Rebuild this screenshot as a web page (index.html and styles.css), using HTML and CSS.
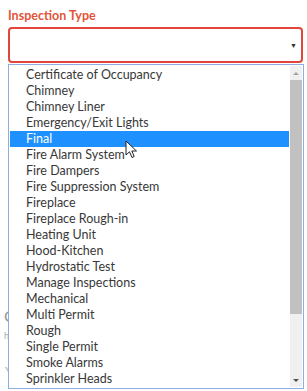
FILE: index.html
```html
<!DOCTYPE html>
<html>
<head>
<meta charset="utf-8">
<link rel="stylesheet" href="styles.css">
</head>
<body>
<div class="page">
  <label class="field-label">Inspection Type</label>
  <div class="select">
    <span class="caret">&#9660;</span>
  </div>
  <div class="bg-form">
    <div class="bg-line l1"></div>
    <div class="bg-line l2"></div>
    <div class="bg-panel">
      <div class="bg-title">C</div>
      <div class="bg-sub">ha</div>
    </div>
    <div class="bg-y">Y</div>
  </div>

  <div class="listbox">
    <ul class="options">
      <li>Certificate of Occupancy</li>
      <li>Chimney</li>
      <li>Chimney Liner</li>
      <li>Emergency/Exit Lights</li>
      <li class="active">Final</li>
      <li>Fire Alarm System</li>
      <li>Fire Dampers</li>
      <li>Fire Suppression System</li>
      <li>Fireplace</li>
      <li>Fireplace Rough-in</li>
      <li>Heating Unit</li>
      <li>Hood-Kitchen</li>
      <li>Hydrostatic Test</li>
      <li>Manage Inspections</li>
      <li>Mechanical</li>
      <li>Multi Permit</li>
      <li>Rough</li>
      <li>Single Permit</li>
      <li>Smoke Alarms</li>
      <li>Sprinkler Heads</li>
    </ul>
    <div class="scrollbar">
      <span class="sb-arrow up"></span>
      <div class="sb-track"><div class="sb-thumb"></div></div>
      <span class="sb-arrow down"></span>
    </div>
  </div>

  <svg class="cursor" width="14" height="20" viewBox="0 0 14 20">
    <path d="M1 1 L1 15 L4.5 11.8 L7 17.5 L9.2 16.5 L6.8 11 L11.5 11 Z" fill="#fff" stroke="#222" stroke-width="1" stroke-linejoin="round"/>
  </svg>
</div>
</body>
</html>
```

FILE: styles.css
```css
* { box-sizing: border-box; }
html, body { margin: 0; padding: 0; background: #fff; }
body {
  font-family: Lato, "Open Sans", "Liberation Sans", sans-serif;
  width: 307px;
  height: 391px;
  overflow: hidden;
}
.page {
  position: relative;
  padding: 7px 4px 0 8px;
  height: 391px;
}
.field-label {
  display: block;
  font-size: 12.5px;
  font-weight: 700;
  color: #e2553a;
  line-height: 17px;
  height: 20px;
}
.select {
  height: 36px;
  border: 2px solid #e2453a;
  border-radius: 4px;
  display: flex;
  align-items: center;
  justify-content: flex-end;
  padding-right: 4px;
}
.caret {
  font-size: 7px;
  color: #333;
}
.bg-form {
  display: flex;
  flex-direction: column;
}
.bg-line {
  height: 1px;
  background: #dcdcdc;
}
.l1 { margin-top: 104px; }
.l2 { margin-top: 71px; }
.bg-panel {
  margin-top: 27px;
  height: 84px;
  background: #f4f4f4;
  border-top: 1px solid #e6e6e6;
  padding: 40px 0 0 0;
}
.bg-title { font-size: 16px; color: #999; line-height: 16px; margin-left: -4px; }
.bg-sub { font-size: 9px; color: #aaa; margin-top: 6px; margin-left: -4px; }
.bg-y { font-size: 14px; color: #bbb; margin-top: 12px; margin-left: -3px; }

.listbox {
  position: absolute;
  left: 8px;
  top: 64px;
  width: 296px;
  height: 325px;
  background: #fff;
  border: 1px solid #8eaee0;
  display: flex;
}
.options {
  list-style: none;
  margin: 0;
  padding: 2px 0 0 1px;
  flex: 1;
}
.options li {
  height: 16px;
  line-height: 16px;
  font-size: 12.5px;
  color: #383838;
  padding-left: 16px;
  white-space: nowrap;
}
.options li.active {
  background: #1e90ff;
  color: #fff;
}
.scrollbar {
  width: 12px;
  margin: 1px;
  background: #f0f0f0;
  display: flex;
  flex-direction: column;
}
.sb-track { flex: 1; }
.sb-thumb {
  height: 234px;
  background: #c1c1c1;
}
.sb-arrow {
  height: 14px;
  display: flex;
  align-items: center;
  justify-content: center;
}
.sb-arrow::before {
  content: "";
  border-left: 3px solid transparent;
  border-right: 3px solid transparent;
}
.sb-arrow.up::before { border-bottom: 3px solid #a3a3a3; }
.sb-arrow.down::before { border-top: 3px solid #505050; }
.cursor {
  position: absolute;
  left: 125px;
  top: 140px;
}
```
